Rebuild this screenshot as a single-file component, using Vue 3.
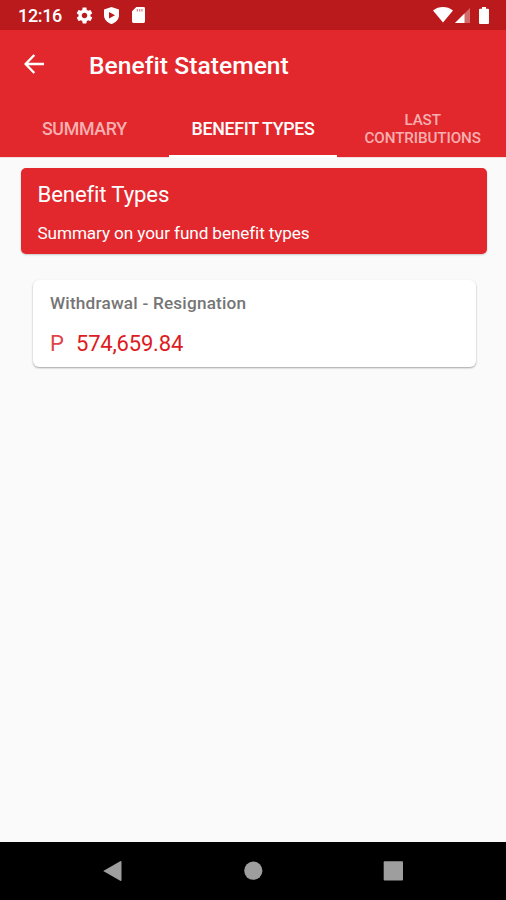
<template>
  <div class="screen">
    <header class="status-bar">
      <span class="clock">12:16</span>
      <div class="status-left">
        <svg class="gear" viewBox="0 0 24 24" aria-hidden="true">
          <path d="M19.43 12.98c.04-.32.07-.64.07-.98s-.03-.66-.07-.98l2.11-1.65c.19-.15.24-.42.12-.64l-2-3.46c-.12-.22-.39-.3-.61-.22l-2.49 1c-.52-.4-1.08-.73-1.69-.98l-.38-2.65C14.46 2.18 14.25 2 14 2h-4c-.25 0-.46.18-.49.42l-.38 2.65c-.61.25-1.17.59-1.69.98l-2.49-1c-.23-.09-.49 0-.61.22l-2 3.46c-.13.22-.07.49.12.64l2.11 1.65c-.04.32-.07.65-.07.98s.03.66.07.98l-2.11 1.65c-.19.15-.24.42-.12.64l2 3.46c.12.22.39.3.61.22l2.49-1c.52.4 1.08.73 1.69.98l.38 2.65c.03.24.24.42.49.42h4c.25 0 .46-.18.49-.42l.38-2.65c.61-.25 1.17-.59 1.69-.98l2.49 1c.23.09.49 0 .61-.22l2-3.46c.12-.22.07-.49-.12-.64l-2.11-1.65zM12 15.5c-1.93 0-3.5-1.57-3.5-3.5s1.57-3.5 3.5-3.5 3.5 1.57 3.5 3.5-1.57 3.5-3.5 3.5z" />
        </svg>
        <svg class="shield" viewBox="0 0 15 17" aria-hidden="true">
          <path fill-rule="evenodd" d="M7.5 0 15 2.6v5.6c0 4-3 7.3-7.5 8.8C3 15.5 0 12.2 0 8.2V2.6zM5 5v6.6l6-3.3z" />
        </svg>
        <svg class="sd" viewBox="0 0 13 16" aria-hidden="true">
          <path d="M4.3 0H11.6Q13 0 13 1.4V14.6Q13 16 11.6 16H1.4Q0 16 0 14.6V4.3z" />
          <path class="notch" d="M4.7 2h1.3v2.6H4.7zM7 2h1.3v2.6H7zM9.3 2h1.3v2.6H9.3z" />
        </svg>
      </div>
      <div class="status-right">
        <svg class="wifi" viewBox="0 0 20 16" aria-hidden="true">
          <path d="M0 3.5C5.8-1.1 14.2-1.1 20 3.5L10 15.5z" />
        </svg>
        <svg class="signal" viewBox="0 0 15 15" aria-hidden="true">
          <path class="faint" d="M0 15 15 0v15z" />
          <path d="M0 15 9.5 5.5V15z" />
        </svg>
        <svg class="battery" viewBox="0 0 10 17" aria-hidden="true">
          <path d="M3 0h4v1.7h2q1 0 1 1V16q0 1-1 1H1q-1 0-1-1V2.7q0-1 1-1h2z" />
        </svg>
      </div>
    </header>

    <div class="app-bar">
      <svg class="back" viewBox="0 0 20 20" aria-hidden="true">
        <path d="M10.3 1 1.6 10l8.7 9M1.8 10H20" />
      </svg>
      <h1 class="title">Benefit Statement</h1>
    </div>

    <nav class="tabs">
      <button
        v-for="tab in tabs"
        :key="tab.id"
        type="button"
        class="tab"
        :class="[tab.id, { active: tab.id === activeTab }]"
        @click="activeTab = tab.id"
      >
        <span>{{ tab.label }}</span>
      </button>
    </nav>

    <main class="content">
      <section class="banner">
        <h2 class="banner-title">Benefit Types</h2>
        <p class="banner-text">Summary on your fund benefit types</p>
      </section>

      <section v-for="item in benefits" :key="item.name" class="card">
        <h3 class="card-title">{{ item.name }}</h3>
        <p class="amount">
          <span class="currency">{{ item.currency }}</span>
          <span>{{ item.amount }}</span>
        </p>
      </section>
    </main>

    <footer class="nav-bar">
      <svg viewBox="0 0 24 24" aria-hidden="true"><path d="M2.2 12 19.2 2.3q1.3-.6 1.3.8v17.8q0 1.4-1.3.8z" /></svg>
      <svg viewBox="0 0 24 24" aria-hidden="true"><circle cx="12.3" cy="11.7" r="9.1" /></svg>
      <svg viewBox="0 0 24 24" aria-hidden="true"><rect x="2.7" y="2.2" width="19.3" height="19.3" rx="1" /></svg>
    </footer>
  </div>
</template>

<script setup>
import { ref } from 'vue';

const activeTab = ref('types');

const tabs = [
  { id: 'summary', label: 'SUMMARY' },
  { id: 'types', label: 'BENEFIT TYPES' },
  { id: 'last', label: 'LAST CONTRIBUTIONS' }
];

const benefits = [
  { name: 'Withdrawal - Resignation', currency: 'P', amount: '574,659.84' }
];
</script>

<style>
body {
  margin: 0;
}
</style>

<style scoped>
.screen {
  display: flex;
  flex-direction: column;
  width: 506px;
  height: 900px;
  overflow: hidden;
  background: #fafafa;
  font-family: Roboto, "Liberation Sans", sans-serif;
}

h1,
h2,
h3,
p {
  margin: 0;
}

svg {
  display: block;
  flex: none;
}

.status-bar {
  display: flex;
  align-items: center;
  flex: none;
  box-sizing: border-box;
  height: 30px;
  padding: 0 17px 0 18px;
  background: #bb1a1d;
  color: #fff;
  fill: #fff;
}

.clock {
  width: 57px;
  padding-top: 2px;
  font-size: 18px;
  font-weight: 500;
  letter-spacing: -0.35px;
  line-height: 20px;
  white-space: nowrap;
}

.status-left,
.status-right {
  display: flex;
  align-items: center;
}

.status-right {
  margin-left: auto;
}

.gear {
  width: 19px;
  height: 19px;
}

.shield {
  width: 15px;
  height: 17px;
  margin-left: 10px;
}

.sd {
  width: 13px;
  height: 16px;
  margin-left: 13px;
}

.notch {
  fill: #d9898b;
}

.wifi {
  width: 20px;
  height: 16px;
}

.signal {
  width: 15px;
  height: 15px;
  margin: 1px 9px 0 2px;
}

.faint {
  opacity: 0.35;
}

.battery {
  width: 10px;
  height: 17px;
}

.app-bar {
  display: flex;
  align-items: center;
  flex: none;
  box-sizing: border-box;
  height: 68px;
  padding-left: 24px;
  background: #e2282d;
  color: #fff;
}

.back {
  width: 20px;
  height: 20px;
  fill: none;
  stroke: #fff;
  stroke-width: 2.4;
}

.title {
  margin-left: 45px;
  padding-top: 3px;
  font-size: 24.6px;
  font-weight: 500;
  letter-spacing: 0.05px;
  line-height: 30px;
  white-space: nowrap;
}

.tabs {
  display: flex;
  flex: none;
  box-sizing: border-box;
  height: 60px;
  border-bottom: 1px solid #f4dcdd;
  background: #e2282d;
}

.tab {
  display: flex;
  align-items: center;
  justify-content: center;
  flex: 0 0 33.333%;
  box-sizing: border-box;
  min-width: 0;
  margin: 0 0 -1px;
  padding: 5px 0 0;
  border: 0;
  border-bottom: 3px solid transparent;
  background: none;
  color: #f7b0b1;
  font-family: inherit;
  font-size: 17.8px;
  font-weight: 500;
  letter-spacing: -0.32px;
  line-height: 18px;
}

.tab.active {
  border-bottom-color: #fff;
  color: #fff;
}

.tab.last {
  padding-left: 21px;
  padding-right: 19px;
  font-size: 15.2px;
  letter-spacing: -0.1px;
}

.content {
  flex: 1;
  padding: 10px 19px 0 20.5px;
}

.banner {
  box-sizing: border-box;
  height: 86px;
  padding: 12px 17px 0;
  border-radius: 5px;
  background: #e2282d;
  box-shadow: 0 1px 2px rgba(0, 0, 0, 0.2);
  color: #fff;
}

.banner-title {
  font-size: 22.2px;
  font-weight: 400;
  letter-spacing: -0.15px;
  line-height: 28px;
}

.banner-text {
  margin-top: 14px;
  font-size: 17.2px;
  letter-spacing: -0.12px;
  line-height: 22px;
}

.card {
  box-sizing: border-box;
  height: 87px;
  margin: 25.5px 11px 0 12.5px;
  padding: 12px 17px 0;
  border-radius: 6px;
  background: #fff;
  box-shadow: 0 1px 2px rgba(0, 0, 0, 0.35);
}

.card-title {
  color: #757575;
  font-size: 17.2px;
  font-weight: 500;
  letter-spacing: 0.2px;
  line-height: 22px;
}

.amount {
  display: flex;
  margin-top: 16px;
  color: #dc1b22;
  font-size: 22px;
  letter-spacing: -0.2px;
  line-height: 28px;
}

.currency {
  width: 26px;
  color: #e0444a;
}

.nav-bar {
  display: flex;
  align-items: center;
  justify-content: space-between;
  flex: none;
  box-sizing: border-box;
  height: 58px;
  padding: 0 101px;
  background: #000;
  fill: #9e9e9e;
}

.nav-bar svg {
  width: 24px;
  height: 24px;
}
</style>
